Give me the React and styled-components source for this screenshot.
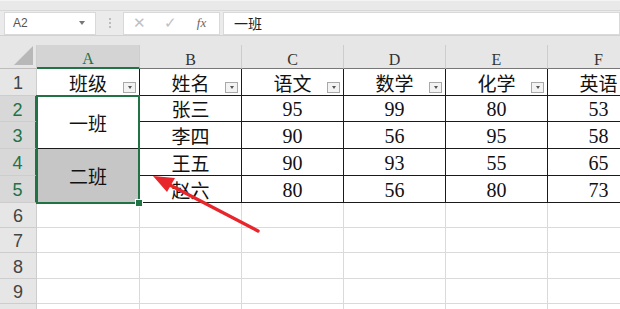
import React from 'react';
import styled, { createGlobalStyle } from 'styled-components';

const GlobalStyle = createGlobalStyle`
  html, body {
    margin: 0;
    padding: 0;
    background: #ffffff;
  }
  body {
    font-family: "Liberation Sans", "Noto Sans CJK SC", sans-serif;
  }
`;

const Page = styled.div`
  position: relative;
  width: 620px;
  height: 309px;
  overflow: hidden;
  background: #fff;
`;

const TopStrip = styled.div`
  height: 9px;
  background: #e9e9e9;
  border-top: 1px solid #f4f4f4;
  border-bottom: 1px solid #d8d8d8;
`;

const FormulaRow = styled.div`
  height: 24px;
  display: flex;
  align-items: center;
  padding-left: 4px;
  background: #ebebeb;
  border-bottom: 1px solid #d2d2d2;
`;

const Box = styled.div`
  height: 23px;
  box-sizing: border-box;
  background: #fff;
  border: 1px solid #d9d9d9;
  display: flex;
  align-items: center;
  width: ${(p) => p.w || 'auto'};
  flex: ${(p) => (p.grow ? 1 : 'none')};
  padding: ${(p) => (p.tight ? '0' : '0 8px')};
  margin-left: ${(p) => p.ml || '0'};
`;

const NameText = styled.span`
  flex: 1;
  font-size: 12px;
  color: #555;
  font-family: "Liberation Sans", sans-serif;
`;

const Caret = styled.span`
  width: 0;
  height: 0;
  border-left: 3.5px solid transparent;
  border-right: 3.5px solid transparent;
  border-top: 4px solid #777;
  margin-right: 2px;
`;

const Dots = styled.div`
  width: 27px;
  display: flex;
  flex-direction: column;
  align-items: center;
  gap: 2px;
  span {
    width: 2px;
    height: 2px;
    background: #bcbcbc;
  }
`;

const FnIcon = styled.span`
  width: 31px;
  text-align: center;
  color: ${(p) => (p.dark ? '#666' : '#c0c0c0')};
  font-family: "Liberation Serif", serif;
  font-style: ${(p) => (p.dark ? 'italic' : 'normal')};
  font-size: ${(p) => (p.dark ? '13px' : '15px')};
`;

const FormulaText = styled.span`
  font-size: 14px;
  color: #222;
  padding-left: 2px;
  font-family: "Liberation Sans", "Noto Sans CJK SC", sans-serif;
`;

const GapStrip = styled.div`
  height: 9px;
  background: #e6e6e6;
`;

const Grid = styled.div`
  display: grid;
  grid-template-columns: 37px 103px repeat(5, 102px);
  grid-template-rows: 24px 27px 26px 27px 27px 27px 25px 25px 26px 25px 25px;
  position: relative;
`;

const Corner = styled.div`
  grid-column: 1;
  grid-row: 1;
  background: #e6e6e6;
  border-right: 1px solid #cfcfcf;
  border-bottom: 1px solid #bdbdbd;
  box-sizing: border-box;
  position: relative;
  &::after {
    content: '';
    position: absolute;
    right: 3px;
    bottom: 3px;
    width: 0;
    height: 0;
    border-left: 19px solid transparent;
    border-bottom: 19px solid #b8b8b8;
  }
`;

const ColHead = styled.div`
  box-sizing: border-box;
  background: ${(p) => (p.active ? '#d4d4d4' : '#e6e6e6')};
  color: ${(p) => (p.active ? '#217346' : '#333')};
  border-right: 1px solid #cdcdcd;
  border-bottom: ${(p) => (p.active ? '2px solid #217346' : '1px solid #777')};
  font-family: "Liberation Serif", serif;
  font-size: 16px;
  display: flex;
  justify-content: center;
  align-items: center;
  padding-top: 6px;
`;

const RowHead = styled.div`
  grid-column: 1;
  grid-row: ${(p) => p.row};
  box-sizing: border-box;
  background: ${(p) => (p.active ? '#d8d8d8' : '#e6e6e6')};
  color: ${(p) => (p.active ? '#217346' : '#444')};
  border-right: ${(p) => (p.active ? '2px solid #217346' : '1px solid #cdcdcd')};
  border-bottom: 1px solid #cdcdcd;
  font-family: "Liberation Sans", sans-serif;
  font-size: 18px;
  display: flex;
  justify-content: center;
  align-items: center;
  padding-top: 3px;
`;

const Cell = styled.div`
  box-sizing: border-box;
  position: relative;
  background: ${(p) => p.fill || '#fff'};
  border-right: 1px solid ${(p) => (p.table ? '#1a1a1a' : '#dadada')};
  border-bottom: 1px solid ${(p) => (p.table ? '#1a1a1a' : '#dadada')};
  display: flex;
  justify-content: center;
  align-items: center;
  font-family: "Liberation Serif", "Noto Sans CJK SC", serif;
  font-size: ${(p) => (p.num ? '20px' : '19px')};
  color: #111;
  padding-top: ${(p) => (p.num ? '2px' : '0')};
  grid-row: ${(p) => p.rows || 'auto'};
  grid-column: ${(p) => p.col || 'auto'};
`;

const Filter = styled.span`
  position: absolute;
  right: 3px;
  bottom: 2px;
  width: 13px;
  height: 11px;
  box-sizing: border-box;
  border: 1px solid #a9a9a9;
  background: #f3f3f3;
  display: flex;
  justify-content: center;
  align-items: center;
  &::after {
    content: '';
    border-left: 2.5px solid transparent;
    border-right: 2.5px solid transparent;
    border-top: 3px solid #555;
  }
`;

const Selection = styled.div`
  grid-column: 2;
  grid-row: 3 / 7;
  margin: -1px 0 -1px -1px;
  border: 2px solid #217346;
  position: relative;
  pointer-events: none;
  z-index: 2;
`;

const Handle = styled.span`
  position: absolute;
  right: -5px;
  bottom: -5px;
  width: 6px;
  height: 6px;
  background: #217346;
  border: 1px solid #fff;
`;

const Arrow = styled.svg`
  position: absolute;
  left: 0;
  top: 0;
  pointer-events: none;
  z-index: 5;
`;

const letters = ['A', 'B', 'C', 'D', 'E', 'F'];
const heads = ['班级', '姓名', '语文', '数学', '化学', '英语'];
const students = [
  ['张三', 95, 99, 80, 53],
  ['李四', 90, 56, 95, 58],
  ['王五', 90, 93, 55, 65],
  ['赵六', 80, 56, 80, 73],
];

export default function App() {
  return (
    <Page>
      <GlobalStyle />
      <TopStrip />
      <FormulaRow>
        <Box w="92px">
          <NameText>A2</NameText>
          <Caret />
        </Box>
        <Dots>
          <span />
          <span />
          <span />
        </Dots>
        <Box w="97px" tight>
          <FnIcon>✕</FnIcon>
          <FnIcon>✓</FnIcon>
          <FnIcon dark>fx</FnIcon>
        </Box>
        <Box grow ml="3px">
          <FormulaText>一班</FormulaText>
        </Box>
      </FormulaRow>
      <GapStrip />
      <Grid>
        <Corner />
        {letters.map((l, i) => (
          <ColHead key={l} active={i === 0}>
            {l}
          </ColHead>
        ))}

        <RowHead row={2}>1</RowHead>
        {heads.map((h) => (
          <Cell key={h} table>
            {h}
            <Filter />
          </Cell>
        ))}

        {[2, 3, 4, 5].map((n) => (
          <RowHead key={n} active row={n + 1}>
            {n}
          </RowHead>
        ))}
        <Cell table col={2} rows="3 / 5">一班</Cell>
        <Cell table col={2} rows="5 / 7" fill="#c6c6c6">二班</Cell>
        {students.map((s, r) =>
          s.map((v, c) => (
            <Cell key={`${r}-${c}`} table num={c > 0} col={c + 3} rows={r + 3}>
              {v}
            </Cell>
          ))
        )}

        {[6, 7, 8, 9, 10].map((n) => (
          <React.Fragment key={n}>
            <RowHead row={n + 1}>{n < 10 ? n : ''}</RowHead>
            {letters.map((l, i) => (
              <Cell key={l} col={i + 2} rows={n + 1} />
            ))}
          </React.Fragment>
        ))}

        <Selection>
          <Handle />
        </Selection>
      </Grid>
      <Arrow width="620" height="309" viewBox="0 0 620 309">
        <line x1="258" y1="231" x2="168" y2="184" stroke="#e8252a" strokeWidth="3.4" strokeLinecap="round" />
        <polygon points="153,176 175,178 167,192" fill="#e8252a" />
      </Arrow>
    </Page>
  );
}
